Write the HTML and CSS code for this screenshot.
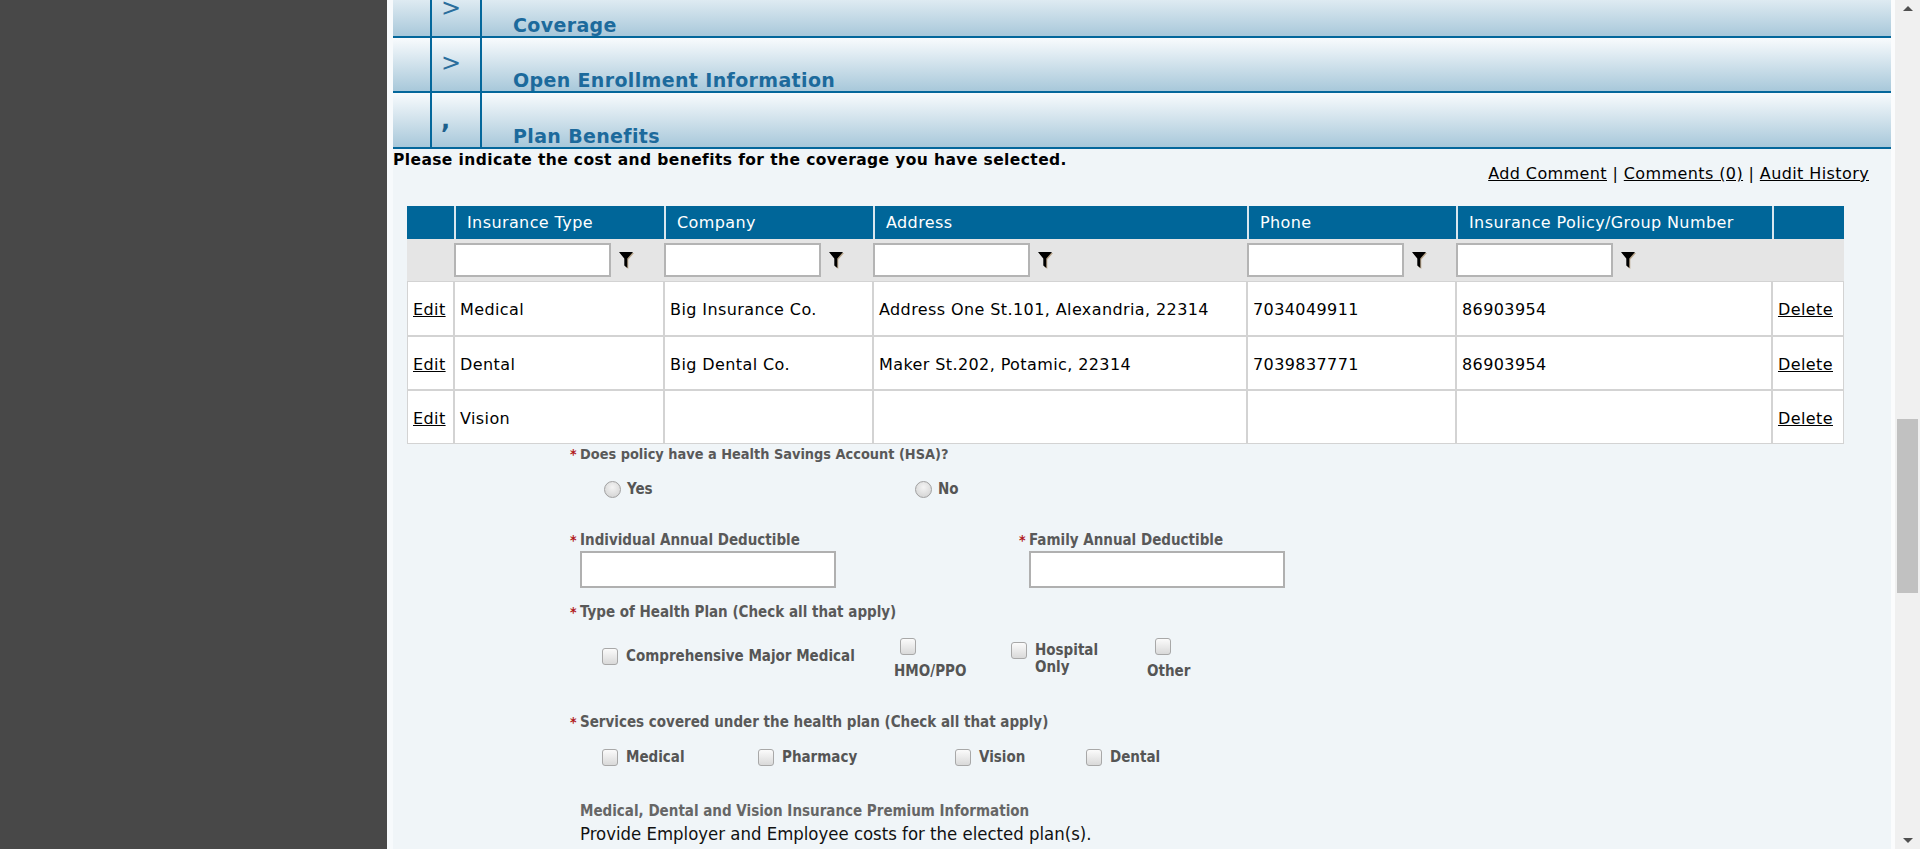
FILE: index.html
```html
<!DOCTYPE html>
<html lang="en">
<head>
<meta charset="utf-8">
<title>Plan Benefits</title>
<link rel="stylesheet" href="styles.css">
</head>
<body>
<div class="app">
  <aside class="side"></aside>
  <main class="main">
    <div class="sections">
      <div class="sec"><div class="sec-a"></div><div class="sec-b"><span class="chev">&gt;</span></div><div class="sec-title">Coverage</div></div>
      <div class="sec"><div class="sec-a"></div><div class="sec-b"><span class="chev">&gt;</span></div><div class="sec-title">Open Enrollment Information</div></div>
      <div class="sec"><div class="sec-a"></div><div class="sec-b"><span class="chev chev-open">,</span></div><div class="sec-title">Plan Benefits</div></div>
    </div>
    <p class="intro">Please indicate the cost and benefits for the coverage you have selected.</p>
    <div class="links"><a href="#">Add Comment</a> | <a href="#">Comments (0)</a> | <a href="#">Audit History</a></div>

    <table class="grid">
      <colgroup>
        <col class="c-edit"><col class="c-type"><col class="c-company"><col class="c-address"><col class="c-phone"><col class="c-policy"><col class="c-del">
      </colgroup>
      <thead>
        <tr class="head">
          <th></th><th>Insurance Type</th><th>Company</th><th>Address</th><th>Phone</th><th>Insurance Policy/Group Number</th><th></th>
        </tr>
        <tr class="filter">
          <td></td>
          <td><div class="fcell"><input class="finput" type="text"><svg class="funnel" viewBox="0 0 15 18" width="15" height="18"><path class="fsh" d="M1 2H15L9.3 8.6V18L6.3 15.4V8.6Z"/><path d="M0 1H14L8.3 7.6V17L5.3 14.4V7.6Z"/></svg></div></td>
          <td><div class="fcell"><input class="finput" type="text"><svg class="funnel" viewBox="0 0 15 18" width="15" height="18"><path class="fsh" d="M1 2H15L9.3 8.6V18L6.3 15.4V8.6Z"/><path d="M0 1H14L8.3 7.6V17L5.3 14.4V7.6Z"/></svg></div></td>
          <td><div class="fcell"><input class="finput" type="text"><svg class="funnel" viewBox="0 0 15 18" width="15" height="18"><path class="fsh" d="M1 2H15L9.3 8.6V18L6.3 15.4V8.6Z"/><path d="M0 1H14L8.3 7.6V17L5.3 14.4V7.6Z"/></svg></div></td>
          <td><div class="fcell"><input class="finput" type="text"><svg class="funnel" viewBox="0 0 15 18" width="15" height="18"><path class="fsh" d="M1 2H15L9.3 8.6V18L6.3 15.4V8.6Z"/><path d="M0 1H14L8.3 7.6V17L5.3 14.4V7.6Z"/></svg></div></td>
          <td><div class="fcell"><input class="finput" type="text"><svg class="funnel" viewBox="0 0 15 18" width="15" height="18"><path class="fsh" d="M1 2H15L9.3 8.6V18L6.3 15.4V8.6Z"/><path d="M0 1H14L8.3 7.6V17L5.3 14.4V7.6Z"/></svg></div></td>
          <td></td>
        </tr>
      </thead>
      <tbody>
        <tr class="row">
          <td><a href="#">Edit</a></td><td>Medical</td><td>Big Insurance Co.</td><td>Address One St.101, Alexandria, 22314</td><td>7034049911</td><td>86903954</td><td><a href="#">Delete</a></td>
        </tr>
        <tr class="row">
          <td><a href="#">Edit</a></td><td>Dental</td><td>Big Dental Co.</td><td>Maker St.202, Potamic, 22314</td><td>7039837771</td><td>86903954</td><td><a href="#">Delete</a></td>
        </tr>
        <tr class="row">
          <td><a href="#">Edit</a></td><td>Vision</td><td></td><td></td><td></td><td></td><td><a href="#">Delete</a></td>
        </tr>
      </tbody>
    </table>

    <form class="form">
      <div class="q q-hsa"><span class="req">*</span>Does policy have a Health Savings Account (HSA)?</div>
      <div class="radios">
        <label class="ropt ropt-yes"><input class="rb" type="radio" name="hsa"><span>Yes</span></label>
        <label class="ropt"><input class="rb" type="radio" name="hsa"><span>No</span></label>
      </div>

      <div class="deds">
        <div class="ded ded-ind">
          <div class="q"><span class="req">*</span>Individual Annual Deductible</div>
          <input class="tinput" type="text">
        </div>
        <div class="ded">
          <div class="q"><span class="req">*</span>Family Annual Deductible</div>
          <input class="tinput" type="text">
        </div>
      </div>

      <div class="q q-type"><span class="req">*</span>Type of Health Plan (Check all that apply)</div>
      <div class="types">
        <label class="topt t-cmm"><input class="cb" type="checkbox"><span>Comprehensive Major Medical</span></label>
        <label class="topt t-stack t-hmo"><input class="cb" type="checkbox"><span>HMO/PPO</span></label>
        <label class="topt t-hosp"><input class="cb" type="checkbox"><span class="t-hosp-text">Hospital Only</span></label>
        <label class="topt t-stack t-other"><input class="cb" type="checkbox"><span>Other</span></label>
      </div>

      <div class="q q-serv"><span class="req">*</span>Services covered under the health plan (Check all that apply)</div>
      <div class="servs">
        <label class="sopt s-med"><input class="cb" type="checkbox"><span>Medical</span></label>
        <label class="sopt s-pha"><input class="cb" type="checkbox"><span>Pharmacy</span></label>
        <label class="sopt s-vis"><input class="cb" type="checkbox"><span>Vision</span></label>
        <label class="sopt"><input class="cb" type="checkbox"><span>Dental</span></label>
      </div>

      <div class="prem-h">Medical, Dental and Vision Insurance Premium Information</div>
      <div class="prem-t">Provide Employer and Employee costs for the elected plan(s).</div>
    </form>
  </main>
  <div class="scrollbar">
    <div class="sb-up"></div>
    <div class="sb-track"><div class="sb-thumb"></div></div>
    <div class="sb-down"></div>
  </div>
</div>
</body>
</html>
```

FILE: styles.css
```css
* { box-sizing: border-box; }
html, body { margin: 0; padding: 0; height: 849px; overflow: hidden; }
body { font-family: "DejaVu Sans", Verdana, sans-serif; color: #000; background: #4a4a4a; }

.app { display: flex; height: 849px; }
.side { width: 387px; flex: none; background: #484848; }
.main {
  flex: 1;
  min-width: 0;
  background: #f0f5f8;
  border-left: 6px solid #f7fafc;
  border-right: 4px solid #fbfcfd;
  overflow: hidden;
}

/* section accordion headers */
.sections { margin-top: -17px; }
.sec {
  display: flex;
  height: 55px;
  border-bottom: 2px solid #04679b;
  background: linear-gradient(#f8fbfd, #a8c8da);
}
.sec:last-child { height: 56px; }
.sec-a { width: 39px; flex: none; border-right: 2px solid #04679b; }
.sec-b { width: 50px; flex: none; border-right: 2px solid #04679b; padding: 13px 0 0 9px; }
.chev { font-size: 24px; line-height: 24px; color: #2a6e9c; display: block; }
.chev-open { font-weight: bold; color: #1d5f8c; margin-top: 2px; }
.sec-title {
  flex: 1;
  display: flex;
  align-items: flex-end;
  padding-left: 31px;
  font-weight: bold;
  font-size: 19px;
  letter-spacing: 0.35px;
  line-height: 22px;
  color: #1c6a9c;
}

.intro { margin: 2px 0 0; font-weight: bold; font-size: 15.5px; letter-spacing: 0.4px; line-height: 18px; }
.links { text-align: right; padding-right: 22px; font-size: 16px; letter-spacing: 0.4px; line-height: 18px; margin-top: -4px; color: #000; }
.links a { color: #000; }

/* grid */
.grid {
  margin: 23px 0 0 14px;
  width: 1437px;
  table-layout: fixed;
  border-collapse: separate;
  border-spacing: 0;
  font-size: 16px;
  letter-spacing: 0.4px;
}
.c-edit { width: 47px; }
.c-type { width: 210px; }
.c-company { width: 209px; }
.c-address { width: 374px; }
.c-phone { width: 209px; }
.c-policy { width: 316px; }
.c-del { width: 72px; }

.head th {
  height: 33px;
  background: #006699;
  color: #fff;
  font-weight: normal;
  text-align: left;
  padding: 0 0 0 11px;
  border-left: 2px solid #d8e6ee;
  white-space: nowrap;
}
.head th:first-child { border-left: none; }

.filter td { height: 42px; background: #e5e5e5; padding: 0; }
.fcell { display: flex; align-items: center; }
.finput {
  width: 157px;
  height: 34px;
  border: 2px solid #b4b4b4;
  background: #fff;
  margin: 0;
  padding: 0 4px;
}
.funnel { margin-left: 8px; }
.funnel path { fill: #000; }
.funnel .fsh { fill: #b9a58a; }

.row td {
  height: 54px;
  background: #fff;
  border: 1px solid #d3d3d3;
  padding: 2px 5px 0;
  vertical-align: middle;
  white-space: nowrap;
}
.row:first-child td { height: 55px; }
.row td a { color: #000; }

/* form */
.form {
  padding-left: 177px;
  font-family: "DejaVu Sans Condensed", "DejaVu Sans", sans-serif;
  font-stretch: condensed;
  color: #555;
}
.q { font-weight: bold; font-size: 15px; line-height: 16px; color: #595959; }
.req { display: inline-block; width: 10px; color: #b01818; font-size: 14px; }
.q-hsa { margin-top: 2px; font-size: 14.4px; }

.radios { display: flex; align-items: center; height: 20px; margin-top: 17px; padding-left: 34px; }
.ropt { display: flex; align-items: center; font-weight: bold; font-size: 15px; }
.ropt-yes { width: 311px; }
.rb {
  appearance: none;
  -webkit-appearance: none;
  width: 17px;
  height: 17px;
  margin: 0 6px 0 0;
  border: 1px solid #a0a0a0;
  border-radius: 50%;
  background: radial-gradient(circle at 50% 35%, #f4f4f4, #cfcfcf);
}

.deds { display: flex; margin-top: 33px; }
.ded-ind { width: 449px; }
.tinput {
  display: block;
  width: 256px;
  height: 37px;
  margin: 3px 0 0 10px;
  border: 2px solid #b0b0b0;
  background: #fff;
}

.q-type { margin-top: 16px; }
.types { display: flex; align-items: center; height: 44px; margin-top: 17px; padding-left: 32px; }
.topt { display: flex; font-weight: bold; font-size: 15px; line-height: 17px; }
.t-cmm { width: 292px; align-items: center; gap: 8px; margin-bottom: 6px; }
.t-stack { flex-direction: column; align-items: flex-start; }
.t-stack span { margin-top: 8px; }
.t-hmo { width: 117px; }
.t-hmo .cb { margin-left: 6px; }
.t-hosp { width: 136px; align-items: flex-start; gap: 8px; }
.t-hosp-text { width: 62px; }
.t-other .cb { margin-left: 8px; }

.cb {
  appearance: none;
  -webkit-appearance: none;
  flex: none;
  width: 16px;
  height: 17px;
  margin: 0;
  border: 1px solid #a8a8a8;
  border-radius: 3px;
  background: linear-gradient(#fbfbfb, #d9d9d9);
}

.q-serv { margin-top: 33px; }
.servs { display: flex; align-items: center; height: 20px; margin-top: 17px; padding-left: 32px; }
.sopt { display: flex; align-items: center; gap: 8px; font-weight: bold; font-size: 15px; }
.s-med { width: 156px; }
.s-pha { width: 197px; }
.s-vis { width: 131px; }

.prem-h { margin-top: 36px; padding-left: 10px; font-weight: bold; font-size: 15px; line-height: 16px; color: #666; }
.prem-t { margin-top: 4px; padding-left: 10px; font-size: 18.4px; line-height: 21px; color: #111; }

/* fake scrollbar */
.scrollbar { width: 25px; flex: none; background: #f0f0f0; display: flex; flex-direction: column; }
.sb-up, .sb-down { height: 17px; position: relative; }
.sb-up::after, .sb-down::after {
  content: "";
  position: absolute;
  left: 8px;
  width: 0; height: 0;
  border-left: 5px solid transparent;
  border-right: 5px solid transparent;
}
.sb-up::after { top: 6px; border-bottom: 5px solid #505050; }
.sb-down::after { top: 6px; border-top: 5px solid #505050; }
.sb-track { flex: 1; padding: 402px 2px 0 2px; }
.sb-thumb { height: 174px; background: #c1c1c1; }
```
